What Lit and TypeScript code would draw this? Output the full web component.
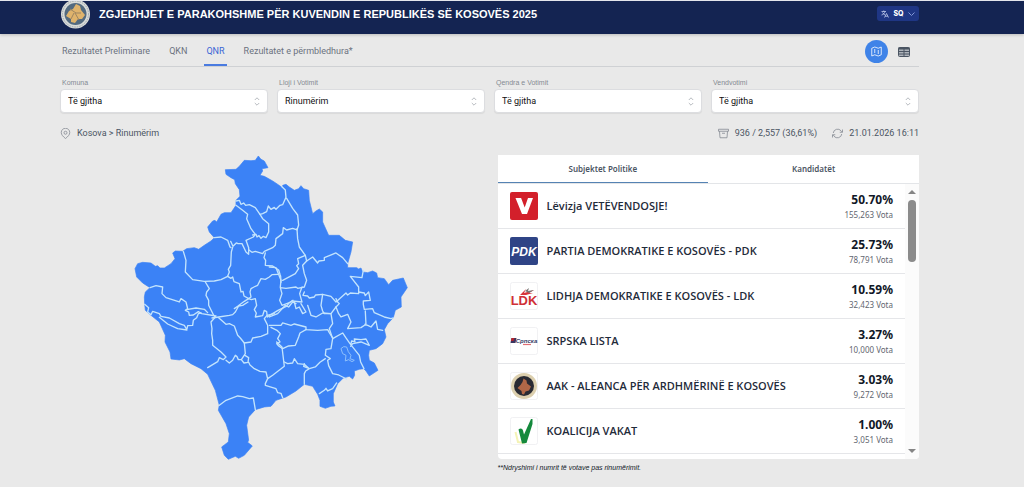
import { LitElement, html, svg, css } from "lit";
import { customElement, state } from "lit/decorators.js";

interface Party {
  logo: string;
  name: string;
  share: string;
  votes: string;
}

const PARTIES: Party[] = [
  { logo: "lvv", name: "Lëvizja VETËVENDOSJE!", share: "50.70%", votes: "155,263" },
  { logo: "pdk", name: "PARTIA DEMOKRATIKE E KOSOVËS - PDK", share: "25.73%", votes: "78,791" },
  { logo: "ldk", name: "LIDHJA DEMOKRATIKE E KOSOVËS - LDK", share: "10.59%", votes: "32,423" },
  { logo: "srpska", name: "SRPSKA LISTA", share: "3.27%", votes: "10,000" },
  { logo: "aak", name: "AAK - ALEANCA PËR ARDHMËRINË E KOSOVËS", share: "3.03%", votes: "9,272" },
  { logo: "vakat", name: "KOALICIJA VAKAT", share: "1.00%", votes: "3,051" },
];

const FILTERS = [
  { id: "komuna", label: "Komuna", value: "Të gjitha" },
  { id: "lloji", label: "Lloji i Votimit", value: "Rinumërim" },
  { id: "qendra", label: "Qendra e Votimit", value: "Të gjitha" },
  { id: "vendi", label: "Vendvotimi", value: "Të gjitha" },
];

const NAV = ["Rezultatet Preliminare", "QKN", "QNR", "Rezultatet e përmbledhura*"];

const LOGOS: Record<string, unknown> = {
  lvv: svg`<rect width="28" height="28" rx="2" fill="#d3202b"/>
    <path d="M5.500 6h5.600l3.600 9.500L18 6h5l-6 16h-5z" fill="#fff"/>`,
  pdk: svg`<rect width="28" height="28" rx="2" fill="#2f4486"/>
    <text x="14" y="18.500" text-anchor="middle" class="mark pdk">PDK</text>`,
  ldk: svg`<rect x=".5" y=".5" width="27" height="27" rx="2" fill="#fff" stroke="#f1f1f3"/>
    <path d="M10 13l6-6-2 4 10-3-5 3 4 0-7 2z" fill="#d8343b"/>
    <path d="M15 9l4-3-1 3 6-1-5 3z" fill="#777"/>
    <text x="14" y="23" text-anchor="middle" class="mark ldk">LDK</text>`,
  srpska: svg`<rect x=".5" y=".5" width="27" height="27" rx="2" fill="#fff" stroke="#f1f1f3"/>
    <path d="M1.500 11h5l-1 5h-5z" fill="#3b3560"/><path d="M1.500 11h3l-1 3h-2.500z" fill="#b3242e"/>
    <text x="16.500" y="15.500" text-anchor="middle" class="mark srpska">Српска</text>
    <path d="M13 17.500h8" stroke="#df6e74" stroke-width="1.200"/>`,
  aak: svg`<rect x=".5" y=".5" width="27" height="27" rx="2" fill="#fff" stroke="#f1f1f3"/>
    <circle cx="14" cy="14" r="13" fill="#dccfae"/><circle cx="14" cy="14" r="10" fill="#292a33"/>
    <path d="M13.500 6.500l3 2 .5 3 4 3-2 4-3.500 1-1.500 3-2-.5-.5-3-4-3 3-3 2-3z" fill="#b06747"/>`,
  vakat: svg`<rect x=".5" y=".5" width="27" height="27" rx="2" fill="#fff" stroke="#f1f1f3"/>
    <path d="M5.500 15l2.500 10 6 1 2-4" fill="none" stroke="#f4f3b5" stroke-width="2"/>
    <path d="M8.500 12.500c2-2 4-1 4.500 1l1 4 7-15.500h1.500v5L16.500 26l-4.500.5z" fill="#14893c"/>`,
};

const OUTLINE =
  "M288 58L320 57 330 48 345 30 365 31 378 30 387 17 395 27 405 32 416 52 398 55 400 62 392 75 405 78 430 92 448 104 460 113 460 105 470 102 480 110 495 120 508 115 515 106 523 115 538 120 540 150 550 190 560 182 570 176 580 185 580 215 598 255 630 255 648 270 670 275 665 305 655 340 655 352 682 352 688 356 695 353 700 365 715 367 730 362 742 368 745 382 765 385 778 403 790 390 822 383 834 412 815 440 816 470 798 480 792 502 775 520 765 538 770 560 760 580 740 595 720 600 718 615 720 630 735 638 746 660 720 677 710 662 703 655 690 657 675 662 676 675 670 686 660 678 642 683 625 700 612 730 612 755 617 767 605 768 588 774 572 768 572 750 565 732 550 708 525 702 500 722 470 740 440 750 425 768 405 770 378 778 358 800 352 825 358 870 355 876 369 887 345 915 328 924 318 918 297 927 285 915 277 890 297 875 300 850 290 820 267 780 270 765 258 720 235 672 215 655 185 640 165 625 150 629 125 626 122 605 107 575 108 555 90 515 65 495 48 480 46 462 45 440 48 425 62 412 40 398 22 380 17 355 25 340 40 336 65 338 78 348 85 346 92 353 105 353 125 340 137 325 130 308 138 302 160 303 172 295 195 292 208 297 225 285 245 272 255 262 240 245 235 230 250 212 257 210 262 215 275 192 285 187 305 187 320 165 320 150 332 138 330 118 318 100 316 88 305 82 290 72Z";

const BORDERS = [
  "M320 152l10-2 5 12 8-4 6 7 11-2 18 9 14 20 8-2 12-6 5-17 8 10 10-6 5 6 12-12 8-2 10-22 -2-22-10-10",
  "M392 192l8 13 18 15v25l-8 17-8-4-7 6-6-8-6 4-3-8-10 2",
  "M320 165l20 15 15 12-3 13 13 30 13 17-6 8-22 10 8 22v20l-8-7-12-25h-12l-5-2-10 10-7-15",
  "M255 262l20-2 20 10 7 20 3 2",
  "M358 298l10 8 10-3 22 7 5-7 25-11 8-7 2-20 20-15 2-18 10 7 18-5 13 5 5-15-3-30-15-20-18-30",
  "M408 308l-4 14 5 8-1 15 22 2 18 12 4 13 2 6 1 18",
  "M162 303l8 27-2 35 22 23 35 5 30-1 20-4 20-10 5-13-3-8 7-12 2-40 4-14",
  "M295 378l10 6 5-4 4 14 16 6 5 25 6-2 3 14 14 8 7-5-3-15 3-10 9-5 11-5 10-20 13 2 12-7 8-7 20-1",
  "M228 395l12 20-8 10-2 10 8 15 0 15 15 30 5 5",
  "M62 412l18-6 20 4-2 20 12 12 40 13 5-10 15 10 5 20-7 5 10 5 2 10 12-1 15-10 10 6 43 7",
  "M172 478l28-5 25 4 10 10M358 445l-13 8-20 15-10 7 M356 455l-16 10-12 2-10 18-8 8-10 2-32 5-20 3",
  "M358 445l8 3 12-3 4 20-7 13 6 10-3 12 22-4 5-16 7 4 2 16 12-8 20-12 25-12 8-10 12-8",
  "M258 500l-13 15 3 20-1 15 3 20v15l25 20 15 15-8 8-12-6-5 12-30 18",
  "M268 502l22 20 10-2 15 7 10 28 8 8 12 15 20-3 5-12 25-5 20-8v-25l-10-20 8-10 22-5",
  "M345 578l3 32-12 18 8 10 12-2 2-14-10-6M290 630l10 8 10-8 8-15 5 4 4 9 9 0M358 636l4 8 13 11 17 8 18 2 5 20 15-10 35-27-3-25-4-33-16-15",
  "M415 685l-7 15v5l32 10 5 12 10 2 5 13",
  "M270 765l20-15 35-13 15 2 20 6 12-2 6 35",
  "M46 462l12 10-3 13 10 8 5-10 20 7 5 8 25 5 30 17 15 5 8 14-28-4-30-14-25-20M173 536l2-10 15-1 2-15 10-8 5-12 8 -2",
  "M503 235l2 30 5 25 18 25 4 17 18-12 15 18 4-6 16-2v-8l35-14 20 14 15 18",
  "M528 315l-23 10 3 15-6 6 6 9-10 15-38 20M420 350l20 2 15 38-2 20",
  "M532 332l-12 13 5 25 7 20-7 20-20 4-5-4-30 4-17-2 5 18-7 20 7 15 20-7 10-6 30 3-7-25 7-20",
  "M525 425l-4 10 14 2 5 6 15-3 4-6 21-2 25 6 15 17 30-27 5 6 8-6 25 2v-20l-25-32 35 4 4-22",
  "M688 425l17 3 3 8 10-11 5 25-21 2v10l3 15 25-2 5 12 30 13 20 5 7-2",
  "M580 432l-5 33 5 17 5 8 20 0 15-20 10-10-5-5-5-10M605 490l2 12 3 18-10 15 10 30-5 30-15 2-2 18 15 10-8 5 3 16 12 24 18 4 24 12",
  "M420 525h35l5-7 25 7 10-4 35 9v8l35 2 30-2 5 9 10 16",
  "M530 538l-18 10-4 12-10 25-20 2-18 8-12-8-6-7 10-5-7-10 8-15-10-10-18-9",
  "M420 500l25-10 23-25 10 5 12-15 10 5M495 455l5 20 10-5 10 20 10-5-15-25M535 465l10 30 15 5 20-12 25 2",
  "M620 470l8 20 7 10 20-8 10 23-10 20 40-3 15-10-2-40M707 522l10 4 8 4 15-18 5 25 15 3",
  "M610 565l30-17 10 15 12 17 28 35 4 20 10 20M665 580l2-8 10 2-2-8 20 2 15-2 10 19-25-10-25 5-6 8",
  "M465 635l10 5 15-2 5-13 10 15 20 2 15 13 18-5 14-14 16-11M525 702v-32l4-8 11-7M525 640l-2 8 17 7M570 730l15-10 5-6 5 8 15-7 12-17",
];

const LAKE = "M635 595l8-6 9 1 5 14 8 11-3 10 13 5-7 4-10-6-10 4 2-17-10-5z";

@customElement("app-root")
export class AppRoot extends LitElement {
  @state() private page = "QNR";
  @state() private tab = 0;

  static styles = css`
    :host {
      display: block;
      min-height: 100vh;
      background: #e9e9e9;
      color: #1f2937;
      font-family: Roboto, "Liberation Sans", sans-serif;
      font-size: 9px;
      line-height: 12px;
    }
    * { box-sizing: border-box; }
    svg { display: block; flex: none; }
    button, select { font: inherit; color: inherit; }
    button { border: 0; padding: 0; background: none; cursor: pointer; }
    .top {
      display: flex;
      align-items: flex-start;
      height: 34px;
      padding: 0 105px 0 61px;
      background: #142452;
      border-top: 1px solid #e4e6ec;
      box-shadow: 0 1px 3px #0003;
      overflow: hidden;
    }
    .title {
      flex: 1;
      margin: 0;
      padding: 6px 0 0 9px;
      font-family: "Liberation Sans", Arial, sans-serif;
      font-size: 11px;
      line-height: 14px;
      font-weight: 700;
      color: #fff;
      white-space: nowrap;
    }
    .lang {
      display: flex;
      align-items: center;
      justify-content: center;
      gap: 4px;
      width: 42px;
      height: 15px;
      margin-top: 5px;
      border-radius: 3px;
      background: #1f3684;
      color: #fff;
      font-family: Inter, sans-serif;
      font-size: 7px;
      font-weight: 800;
    }
    .wrap { padding: 0 105px 12px 60px; }
    .nav {
      display: flex;
      align-items: stretch;
      height: 33px;
      border-bottom: 1px solid #cfd1d4;
    }
    .links { display: flex; flex: 1; gap: 15px; }
    .link {
      display: flex;
      align-items: center;
      padding: 3px 2px 0;
      border-bottom: 2px solid transparent;
      color: #6b7280;
      text-decoration: none;
      white-space: nowrap;
    }
    .link.on { color: #3b66d6; border-color: #4a7be0; }
    .views { display: flex; align-items: center; gap: 4px; padding: 3px 4px 0 0; }
    .view {
      display: grid;
      place-items: center;
      width: 23px;
      height: 23px;
      border-radius: 50%;
      color: #4b5563;
    }
    .view.on { background: #3f83e8; color: #fff; }
    .filters {
      display: grid;
      grid-template-columns: repeat(4, 1fr);
      gap: 9px;
      padding-top: 10px;
    }
    .filter label {
      display: block;
      padding-left: 2px;
      font-family: "Liberation Sans", Arial, sans-serif;
      font-size: 7px;
      line-height: 12px;
      color: #858a93;
    }
    .pick { display: grid; align-items: center; }
    .pick select, .pick svg { grid-area: 1 / 1; }
    .pick svg { justify-self: end; margin-right: 8px; pointer-events: none; }
    .pick select {
      appearance: none;
      width: 100%;
      height: 24px;
      padding: 0 7px;
      border: 1px solid #dcdde0;
      border-radius: 4px;
      background: #fff;
      color: #111;
      box-shadow: 0 1px 1px #0001;
    }
    .status {
      display: flex;
      align-items: center;
      gap: 15px;
      padding: 14px 0 16px;
      color: #4b5563;
    }
    .status span { display: flex; align-items: center; gap: 6px; }
    .status .place { flex: 1; }
    .main {
      display: grid;
      grid-template-columns: 1fr 1fr;
      gap: 16px;
      align-items: start;
    }
    .map { width: 65%; height: auto; margin: 0 auto; }
    .card {
      background: #fff;
      border-radius: 0 0 4px 4px;
      font-family: "Noto Sans", "Open Sans", sans-serif;
      overflow: hidden;
    }
    .tabs { display: grid; grid-template-columns: 1fr 1fr; border-bottom: 1px solid #e3e5e8; }
    .tab {
      height: 28px;
      font-size: 8px;
      font-weight: 600;
      color: #4b5563;
      border-bottom: 1px solid transparent;
    }
    .tab.on { border-color: #5583b3; }
    .body { display: flex; }
    .rows { flex: 1; margin: 0; padding: 0 0 5px; list-style: none; }
    .row {
      display: flex;
      align-items: center;
      gap: 9px;
      height: 45px;
      padding: 0 12px;
      border-bottom: 1px solid #e5e6e9;
    }
    .name {
      flex: 1;
      font-family: "Open Sans", "Noto Sans", sans-serif;
      font-size: 11px;
      line-height: 16px;
      font-weight: 600;
      color: #1f2b3a;
      white-space: nowrap;
    }
    .score { text-align: right; }
    .share { display: block; font-size: 12px; line-height: 16px; font-weight: 700; color: #111827; }
    .votes { display: block; font-size: 8px; line-height: 13px; color: #5f6670; }
    .bar {
      display: flex;
      flex-direction: column;
      align-items: center;
      width: 14px;
      padding: 6px 0;
      background: #fbfbfb;
    }
    .track { flex: 1; padding-top: 6px; }
    .thumb { width: 8px; height: 62px; border-radius: 4px; background: #8b8b8b; }
    .note {
      margin: 3px 0 0;
      font-family: "Liberation Sans", Arial, sans-serif;
      font-size: 7px;
      font-style: italic;
      color: #111827;
    }
    .mark { font-family: "Liberation Sans", Arial, sans-serif; font-weight: 700; }
    .pdk { font-size: 12px; font-style: italic; fill: #fff; }
    .ldk { font-size: 13px; fill: #cf2f37; }
    .srpska { font-size: 6px; font-style: italic; fill: #343c66; }
  `;

  private emblem() {
    return html`<svg width="29" height="29" viewBox="0 0 29 29" aria-hidden="true">
      <circle cx="14.500" cy="13" r="14.500" fill="#d9dbd8"/>
      <circle cx="14.500" cy="13" r="13" fill="none" stroke="#9ca6b1" stroke-dasharray="1.500 1"/>
      <circle cx="14.500" cy="13" r="11" fill="#536a80"/>
      <path d="M15 3l4 2 1 4 4 5-3 4-4 0-3 4-4-1 0-3-5-3 3-5 4-2z" fill="#dfb36c"/>
      <path d="M9 8l6 4 5 0M13 12l-3 6M14 12l4 7" stroke="#9d8560" fill="none"/>
    </svg>`;
  }

  render() {
    return html`
      <header class="top">
        ${this.emblem()}
        <h1 class="title">ZGJEDHJET E PARAKOHSHME PËR KUVENDIN E REPUBLIKËS SË KOSOVËS 2025</h1>
        <button class="lang">
          <svg width="8" height="8" viewBox="0 0 16 16" fill="none" stroke="#c9d3f2" stroke-width="1.500" aria-hidden="true">
            <path d="M1 3h9M5.500 1v2M8 3c-1 4-3 6-7 7M3 5c1 2 3 4 5 5M7 15l4-8 4 8M8.500 12.500h5"/>
          </svg>
          SQ
          <svg width="7" height="4" viewBox="0 0 7 4" fill="none" stroke="#8397d6" aria-hidden="true"><path d="M.5.5l3 3 3-3"/></svg>
        </button>
      </header>
      <div class="wrap">
        <nav class="nav">
          <div class="links">
            ${NAV.map((n) => html`<a href="#" class="link ${n === this.page ? "on" : ""}"
              @click=${(e: Event) => { e.preventDefault(); this.page = n; }}>${n}</a>`)}
          </div>
          <div class="views">
            <button class="view on" aria-label="Harta">
              <svg width="11" height="11" viewBox="0 0 22 22" fill="none" stroke="currentColor" stroke-width="1.600" stroke-linejoin="round">
                <path d="M1.500 4.500l6-2.500 7 2.500 6-2.500v15.500l-6 2.500-7-2.500-6 2.500zM7.500 6v8M14.500 8v8"/>
              </svg>
            </button>
            <button class="view" aria-label="Tabela">
              <svg width="12" height="10" viewBox="0 0 12 10" fill="none" stroke="currentColor">
                <rect x=".5" y=".5" width="11" height="9" rx="1" fill="#aeb3ba"/>
                <path d="M.5 1.500h11" stroke-width="2"/><path d="M.5 4.500h11M.5 7h11M6 1v8"/>
              </svg>
            </button>
          </div>
        </nav>
        <div class="filters">
          ${FILTERS.map((f) => html`<div class="filter">
            <label for=${f.id}>${f.label}</label>
            <div class="pick">
              <select id=${f.id}><option>${f.value}</option></select>
              <svg width="6" height="9" viewBox="0 0 6 9" fill="none" stroke="#a5a9b0" stroke-width=".8" aria-hidden="true">
                <path d="M.8 3L3 .8 5.200 3M.8 6L3 8.200 5.200 6"/>
              </svg>
            </div>
          </div>`)}
        </div>
        <div class="status">
          <span class="place">
            <svg width="11" height="11" viewBox="0 0 22 22" fill="none" stroke="#858a93" stroke-width="1.600">
              <path d="M11 21C6 17 2.500 13.500 2.500 9a8.500 8.500 0 0 1 17 0c0 4.500-3.500 8-8.500 12z"/><circle cx="11" cy="9.500" r="3"/>
            </svg>
            Kosova &gt; Rinumërim
          </span>
          <span>
            <svg width="11" height="11" viewBox="0 0 22 22" fill="none" stroke="#858a93" stroke-width="1.600">
              <path d="M1 2.500h20v4H1zM3 6.500l1 13h14l1-13M8 10.500h6"/>
            </svg>
            936 / 2,557 (36,61%)
          </span>
          <span>
            <svg width="11" height="11" viewBox="0 0 22 22" fill="none" stroke="#858a93" stroke-width="1.600">
              <path d="M2.500 10A8.800 8.800 0 0 1 18 5.500l3 3M21 3v5.500h-5.500M19.500 12A8.800 8.800 0 0 1 4 16.500l-3-3M1 19v-5.500h5.500"/>
            </svg>
            21.01.2026 16:11
          </span>
        </div>
        <main class="main">
          <svg class="map" viewBox="14 14 822 916" role="img" aria-label="Harta e Kosovës">
            <path d=${OUTLINE} fill="#3b82f6" stroke="#3b82f6" stroke-width="2" stroke-linejoin="round"/>
            <g fill="none" stroke="#c3e4fd" stroke-width="4" stroke-linejoin="round" stroke-linecap="round">
              ${BORDERS.map((d) => svg`<path d=${d}/>`)}
            </g>
            <path d=${LAKE} fill="none" stroke="#8fc0fb" stroke-width="3"/>
          </svg>
          <section>
            <div class="card">
              <div class="tabs" role="tablist">
                ${["Subjektet Politike", "Kandidatët"].map((t, i) => html`<button role="tab"
                  aria-selected=${i === this.tab ? "true" : "false"}
                  class="tab ${i === this.tab ? "on" : ""}" @click=${() => { this.tab = i; }}>${t}</button>`)}
              </div>
              <div class="body">
                <ul class="rows">
                  ${PARTIES.map((p) => html`<li class="row">
                    <svg width="28" height="28" viewBox="0 0 28 28" aria-hidden="true">${LOGOS[p.logo]}</svg>
                    <span class="name">${p.name}</span>
                    <span class="score"><b class="share">${p.share}</b><span class="votes">${p.votes} Vota</span></span>
                  </li>`)}
                </ul>
                <div class="bar" aria-hidden="true">
                  <svg width="8" height="4" viewBox="0 0 8 4"><path d="M0 4l4-4 4 4z" fill="#858585"/></svg>
                  <div class="track"><div class="thumb"></div></div>
                  <svg width="8" height="4" viewBox="0 0 8 4"><path d="M0 0l4 4 4-4z" fill="#858585"/></svg>
                </div>
              </div>
            </div>
            <p class="note">**Ndryshimi i numrit të votave pas rinumërimit.</p>
          </section>
        </main>
      </div>
    `;
  }
}
